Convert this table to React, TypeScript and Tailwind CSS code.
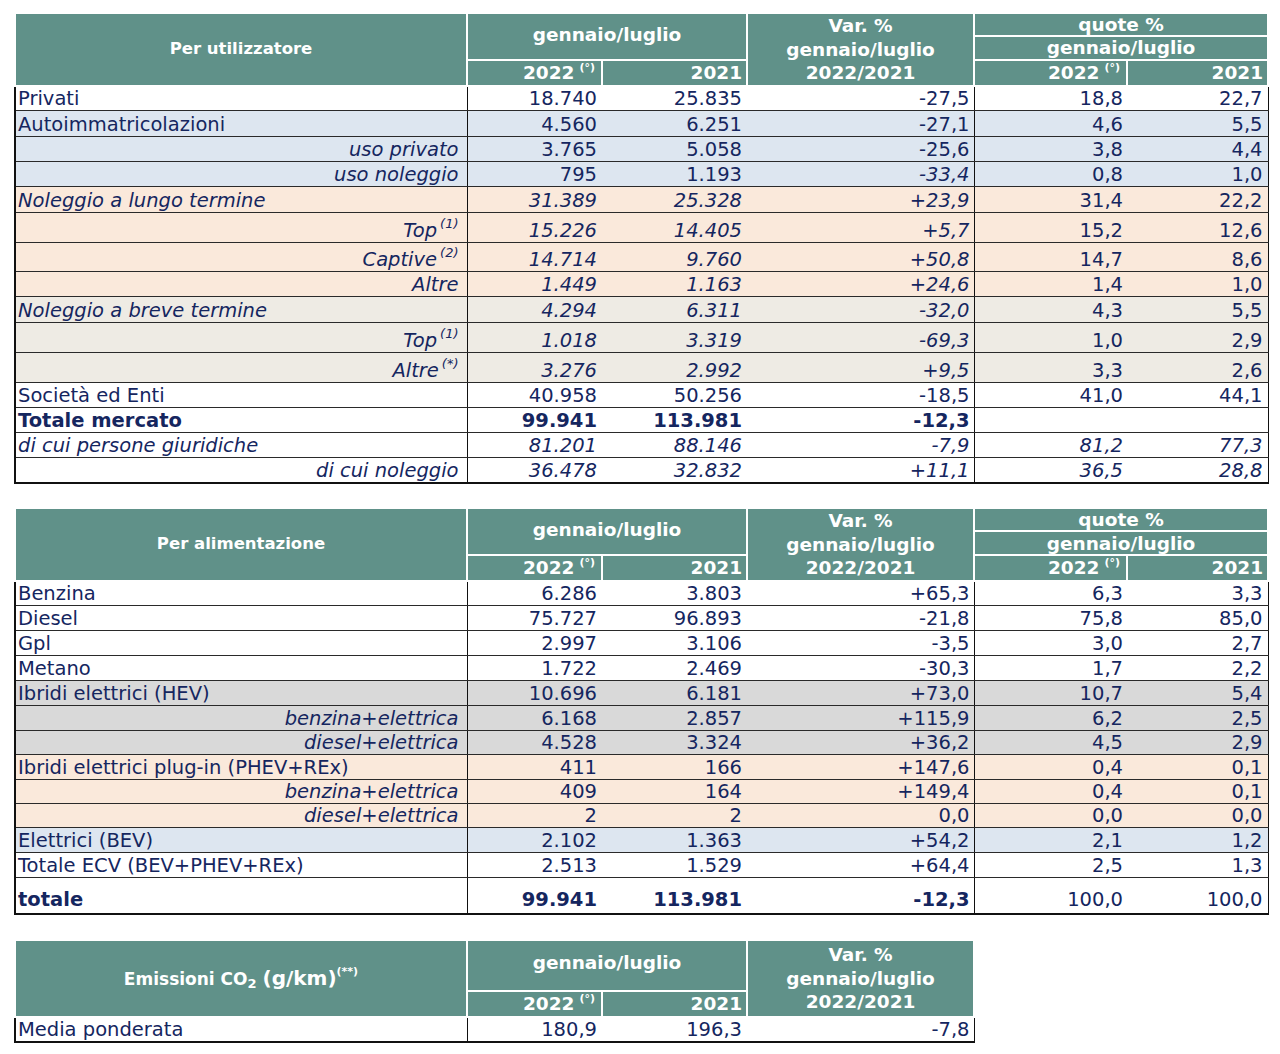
import type { ReactNode } from "react";

type Row = {
  l: ReactNode;
  n: string[];
  bg: string;
  h: string;
  r?: boolean; // label aligned right
  li?: boolean; // label italic
  ls?: boolean; // small label
  ni?: boolean; // numbers italic
  vi?: boolean; // var italic
  qi?: boolean; // quote italic
  b?: boolean; // bold (label, numbers, var)
  pb?: string;
  last?: boolean;
};

const W = "bg-white";
const B = "bg-[#dde6f0]";
const P = "bg-[#fae9db]";
const G = "bg-[#eeebe4]";
const GR = "bg-[#d9d9d9]";

const Sup = ({ children }: { children: ReactNode }) => (
  <sup className="text-[13px] ml-[3px] -top-[9px]">{children}</sup>
);

const t1: Row[] = [
  { l: "Privati", n: ["18.740", "25.835", "-27,5", "18,8", "22,7"], bg: W, h: "h-[24.75px]" },
  { l: "Autoimmatricolazioni", n: ["4.560", "6.251", "-27,1", "4,6", "5,5"], bg: B, h: "h-[25.75px]" },
  { l: "uso privato", r: true, li: true, n: ["3.765", "5.058", "-25,6", "3,8", "4,4"], bg: B, h: "h-[24.75px]" },
  { l: "uso noleggio", r: true, li: true, vi: true, n: ["795", "1.193", "-33,4", "0,8", "1,0"], bg: B, h: "h-[24.75px]" },
  { l: "Noleggio a lungo termine", li: true, ni: true, vi: true, n: ["31.389", "25.328", "+23,9", "31,4", "22,2"], bg: P, h: "h-[25.75px]" },
  { l: <>Top<Sup>(1)</Sup></>, r: true, li: true, ni: true, vi: true, n: ["15.226", "14.405", "+5,7", "15,2", "12,6"], bg: P, h: "h-[29.75px]" },
  { l: <>Captive<Sup>(2)</Sup></>, r: true, li: true, ni: true, vi: true, n: ["14.714", "9.760", "+50,8", "14,7", "8,6"], bg: P, h: "h-[28.75px]" },
  { l: "Altre", r: true, li: true, ni: true, vi: true, n: ["1.449", "1.163", "+24,6", "1,4", "1,0"], bg: P, h: "h-[24.75px]" },
  { l: "Noleggio a breve termine", li: true, ni: true, vi: true, n: ["4.294", "6.311", "-32,0", "4,3", "5,5"], bg: G, h: "h-[25.75px]" },
  { l: <>Top<Sup>(1)</Sup></>, r: true, li: true, ni: true, vi: true, n: ["1.018", "3.319", "-69,3", "1,0", "2,9"], bg: G, h: "h-[29.75px]" },
  { l: <>Altre<Sup>(*)</Sup></>, r: true, li: true, ni: true, vi: true, n: ["3.276", "2.992", "+9,5", "3,3", "2,6"], bg: G, h: "h-[29.75px]" },
  { l: "Società ed Enti", n: ["40.958", "50.256", "-18,5", "41,0", "44,1"], bg: W, h: "h-[24.75px]" },
  { l: "Totale mercato", b: true, n: ["99.941", "113.981", "-12,3", "", ""], bg: W, h: "h-[24.75px]" },
  { l: "di cui persone giuridiche", li: true, ni: true, vi: true, qi: true, n: ["81.201", "88.146", "-7,9", "81,2", "77,3"], bg: W, h: "h-[24.75px]" },
  { l: "di cui noleggio", r: true, li: true, ni: true, vi: true, qi: true, n: ["36.478", "32.832", "+11,1", "36,5", "28,8"], bg: W, h: "h-[25.25px]", last: true },
];

const t2: Row[] = [
  { l: "Benzina", n: ["6.286", "3.803", "+65,3", "6,3", "3,3"], bg: W, h: "h-[24.75px]" },
  { l: "Diesel", n: ["75.727", "96.893", "-21,8", "75,8", "85,0"], bg: W, h: "h-[24.75px]" },
  { l: "Gpl", n: ["2.997", "3.106", "-3,5", "3,0", "2,7"], bg: W, h: "h-[24.75px]" },
  { l: "Metano", n: ["1.722", "2.469", "-30,3", "1,7", "2,2"], bg: W, h: "h-[24.75px]" },
  { l: "Ibridi elettrici (HEV)", n: ["10.696", "6.181", "+73,0", "10,7", "5,4"], bg: GR, h: "h-[24.75px]" },
  { l: "benzina+elettrica", r: true, li: true, ls: true, n: ["6.168", "2.857", "+115,9", "6,2", "2,5"], bg: GR, h: "h-[24.75px]" },
  { l: "diesel+elettrica", r: true, li: true, ls: true, n: ["4.528", "3.324", "+36,2", "4,5", "2,9"], bg: GR, h: "h-[23.75px]" },
  { l: "Ibridi elettrici plug-in (PHEV+REx)", n: ["411", "166", "+147,6", "0,4", "0,1"], bg: P, h: "h-[24.75px]" },
  { l: "benzina+elettrica", r: true, li: true, ls: true, n: ["409", "164", "+149,4", "0,4", "0,1"], bg: P, h: "h-[23.75px]" },
  { l: "diesel+elettrica", r: true, li: true, ls: true, n: ["2", "2", "0,0", "0,0", "0,0"], bg: P, h: "h-[23.75px]" },
  { l: "Elettrici (BEV)", n: ["2.102", "1.363", "+54,2", "2,1", "1,2"], bg: B, h: "h-[24.75px]" },
  { l: "Totale ECV (BEV+PHEV+REx)", n: ["2.513", "1.529", "+64,4", "2,5", "1,3"], bg: W, h: "h-[24.75px]" },
  { l: "totale", b: true, n: ["99.941", "113.981", "-12,3", "100,0", "100,0"], bg: W, h: "h-[36px]", pb: "pb-[3px]", last: true },
];

const t3: Row[] = [
  { l: "Media ponderata", n: ["180,9", "196,3", "-7,8"], bg: W, h: "h-[25px]", last: true },
];

const th = "bg-[#609189] text-white font-bold border-2 border-white p-0 align-middle";

function Head({ title, quote }: { title: ReactNode; quote: boolean }) {
  const yr = (
    <>
      <th className={`${th} text-right pr-[6px] text-[18.5px] leading-[21px]`}>
        2022<sup className="text-[11px] ml-[5px] -top-[8px]">(°)</sup>
      </th>
      <th className={`${th} text-right pr-[4px] text-[18.5px] leading-[21px]`}>2021</th>
    </>
  );
  const varH = (
    <th rowSpan={quote ? 3 : 2} className={`${th} text-center text-[18.5px] leading-[23.5px]`}>
      Var. %<br />
      gennaio/luglio<br />
      2022/2021
    </th>
  );
  if (!quote)
    return (
      <thead>
        <tr className="h-[51px]">
          <th rowSpan={2} className={`${th} text-center`}>{title}</th>
          <th colSpan={2} className={`${th} text-center text-[18.5px] pb-[4px]`}>gennaio/luglio</th>
          {varH}
        </tr>
        <tr className="h-[26px]">{yr}</tr>
      </thead>
    );
  return (
    <thead>
      <tr className="h-[22px]">
        <th rowSpan={3} className={`${th} text-center`}>{title}</th>
        <th colSpan={2} rowSpan={2} className={`${th} text-center text-[18.5px] pb-[4px]`}>gennaio/luglio</th>
        {varH}
        <th colSpan={2} className={`${th} text-center text-[18.5px] leading-[19px]`}>quote %</th>
      </tr>
      <tr className="h-[22.5px]">
        <th colSpan={2} className={`${th} text-center text-[18.5px] leading-[19px]`}>gennaio/luglio</th>
      </tr>
      <tr className="h-[24.5px]">
        {yr}
        {yr}
      </tr>
    </thead>
  );
}

function Body({ rows, quote }: { rows: Row[]; quote: boolean }) {
  return (
    <tbody>
      {rows.map((r, i) => {
        const bb = r.last ? "border-b-2 border-b-[#111]" : "border-b border-b-[#2a2a2a]";
        const td = `${r.bg} ${bb} p-0 ${r.pb ?? "pb-[1px]"} align-bottom leading-[21px] text-[19.5px] whitespace-nowrap`;
        const nb = r.b ? "font-bold" : r.ni ? "italic" : "";
        return (
          <tr key={i} className={r.h}>
            <td
              className={`${td} border-l-2 border-l-[#111] border-r border-r-[#111] ${r.r ? "text-right pr-[8px]" : "text-left pl-[2px]"} ${r.li ? "italic" : ""} ${r.b ? "font-bold" : ""} ${r.ls ? "text-[16px] leading-[20px]" : ""}`}
            >
              {r.l}
            </td>
            <td className={`${td} text-right pr-[5px] ${nb}`}>{r.n[0]}</td>
            <td className={`${td} text-right pr-[5px] ${nb}`}>{r.n[1]}</td>
            <td className={`${td} text-right pr-[4px] border-r border-r-[#111] ${r.b ? "font-bold" : r.vi ? "italic" : ""}`}>{r.n[2]}</td>
            {quote && (
              <>
                <td className={`${td} text-right pr-[4px] ${r.qi ? "italic" : ""}`}>{r.n[3]}</td>
                <td className={`${td} text-right pr-[5px] border-r border-r-[#111] ${r.qi ? "italic" : ""}`}>{r.n[4]}</td>
              </>
            )}
          </tr>
        );
      })}
    </tbody>
  );
}

function DataTable({ title, rows, quote = true }: { title: ReactNode; rows: Row[]; quote?: boolean }) {
  return (
    <table className={`table-fixed border-collapse ${quote ? "w-[1253px]" : "w-[959px]"}`}>
      <colgroup>
        <col className="w-[452px]" />
        <col className="w-[135px]" />
        <col className="w-[145px]" />
        <col className="w-[227px]" />
        {quote && (
          <>
            <col className="w-[153px]" />
            <col className="w-[141px]" />
          </>
        )}
      </colgroup>
      <Head title={title} quote={quote} />
      <Body rows={rows} quote={quote} />
    </table>
  );
}

export default function App() {
  return (
    <div className="min-h-[1054px] w-[1280px] bg-white font-['DejaVu_Sans',sans-serif] text-[#15265f] pl-[14px] pt-[12px] flex flex-col gap-[27px]">
      <DataTable title={<span className="text-[16.5px]">Per utilizzatore</span>} rows={t1} />
      <DataTable title={<span className="text-[16.5px]">Per alimentazione</span>} rows={t2} />
      <DataTable
        quote={false}
        title={
          <span className="text-[17px]">
            Emissioni CO<sub className="text-[13px] -bottom-[3px]">2</sub>{" "}
            <span className="text-[20px]">(g/km)</span>
            <sup className="text-[11px] -top-[10px]">(**)</sup>
          </span>
        }
        rows={t3}
      />
    </div>
  );
}
